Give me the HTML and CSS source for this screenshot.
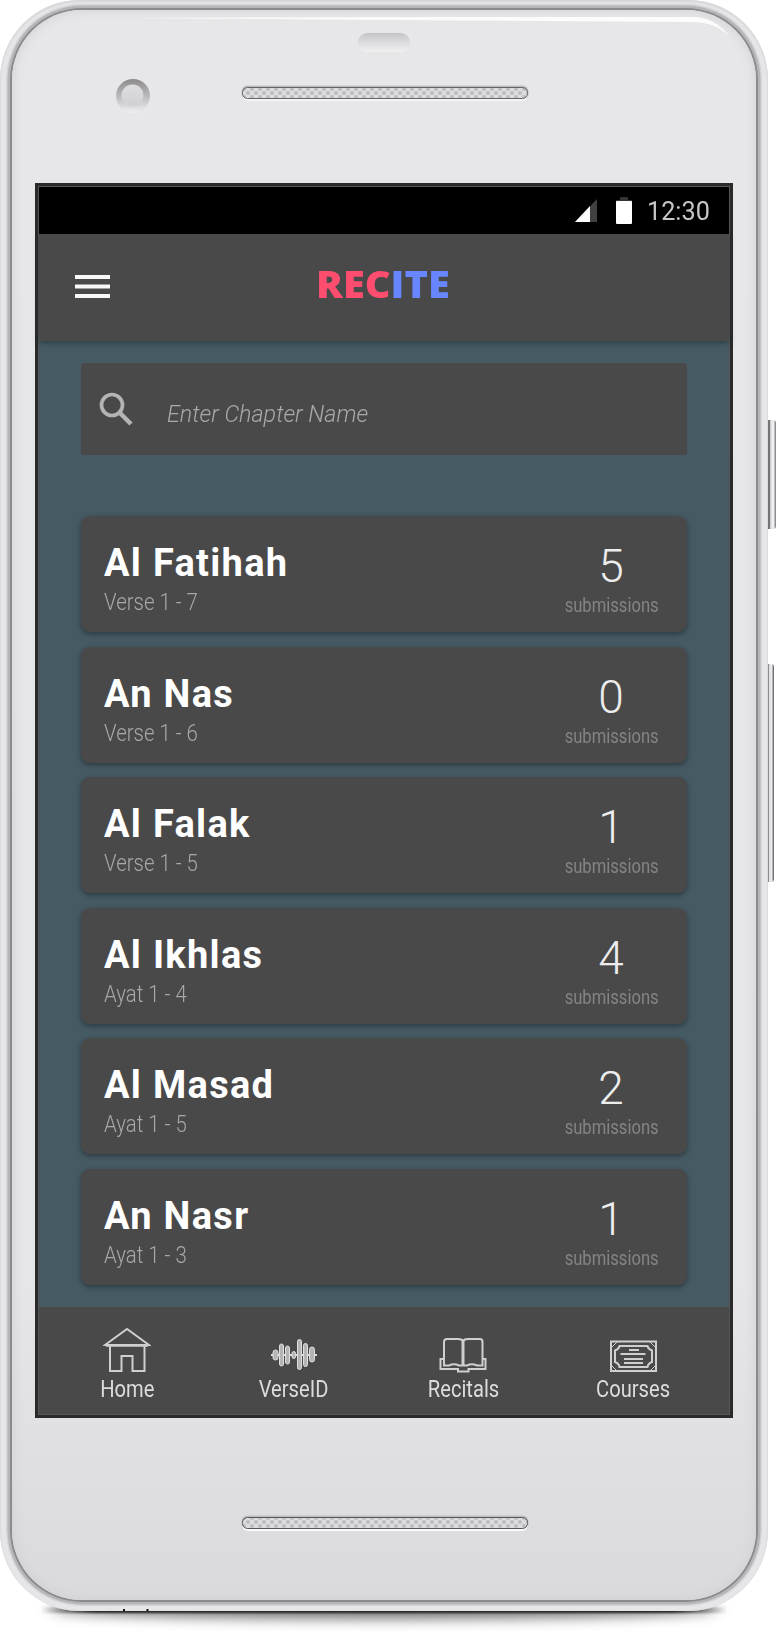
FILE: index.html
```html
<!DOCTYPE html>
<html lang="en">
<head>
<meta charset="utf-8">
<title>Recite</title>
<link rel="stylesheet" href="styles.css">
</head>
<body>
<div class="stage">
  <div class="ground"></div>
  <div class="ground contact"></div>
  <div class="side-button power"></div>
  <div class="side-button volume"></div>
  <div class="phone">
    <div class="face"></div>
    <svg class="hardware" width="768" height="183" viewBox="0 0 768 183">
      <defs>
        <linearGradient id="sensor" x1="0" y1="0" x2="0" y2="1"><stop offset="0" stop-color="#c3c2c4"/><stop offset=".5" stop-color="#dcdcde"/><stop offset="1" stop-color="#f0f0f1"/></linearGradient>
        <linearGradient id="ring" x1="0" y1="0" x2="0" y2="1"><stop offset="0" stop-color="#8d8a8b"/><stop offset=".5" stop-color="#bab9bb"/><stop offset="1" stop-color="#f0f0f2"/></linearGradient>
        <linearGradient id="lens" x1="0" y1="0" x2="0" y2="1"><stop offset="0" stop-color="#dedee0"/><stop offset="1" stop-color="#d0d0d2"/></linearGradient>
        <linearGradient id="shine"><stop offset="0" stop-color="#fff" stop-opacity="0"/><stop offset=".12" stop-color="#fff" stop-opacity=".8"/><stop offset="1" stop-color="#fff" stop-opacity=".9"/></linearGradient>
        <pattern id="mesh" x="244" y="87" width="8" height="8" patternUnits="userSpaceOnUse"><circle cx="4" cy="6" r="2" fill="#bcbcbf"/><circle cx="0" cy="2" r="2" fill="#bcbcbf"/><circle cx="8" cy="2" r="2" fill="#bcbcbf"/></pattern>
      </defs>
      <path d="M100 18 L380 17 H692 C708 17 720 24 729 36 C718 26 708 22 692 22 L380 20 Z" fill="url(#shine)"/>
      <rect x="358" y="33" width="52" height="19" rx="9.500" fill="url(#sensor)"/>
      <circle cx="133" cy="96" r="17" fill="url(#ring)"/>
      <circle cx="132.500" cy="95.500" r="11" fill="url(#lens)"/>
      <rect x="241.500" y="85.500" width="287" height="15" rx="6" fill="#bdbdc0"/>
      <rect x="242" y="89" width="286" height="12" rx="6" fill="#f5f5f7"/>
      <rect x="242.500" y="87.500" width="285" height="11" rx="5" fill="#dcdcde"/>
      <rect x="242.500" y="87.500" width="285" height="11" rx="5" fill="url(#mesh)" stroke="#626266"/>
    </svg>
    <div class="screen">
      <div class="status">
        <svg class="signal" width="24" height="24" viewBox="0 0 24 24"><path d="M1 23 23 0V23Z" fill="#414141"/><path d="M1 23 16 7V23Z" fill="#fff"/></svg>
        <svg class="battery" width="16" height="27" viewBox="0 0 16 27"><path d="M4 0H12V3H16V7H0V3H4Z" fill="#333"/><rect y="4" width="16" height="23" rx="1" fill="#fff"/></svg>
        <span class="clock">12:30</span>
      </div>
      <div class="appbar">
        <svg class="menu" width="35" height="26" viewBox="0 0 35 26" fill="#f8f8f8"><rect y="1" width="35" height="4"/><rect y="10.500" width="35" height="4"/><rect y="20" width="35" height="4"/></svg>
        <div class="logo"><span class="rec">REC</span><span class="ite">ITE</span></div>
      </div>
      <div class="content">
        <div class="search">
          <svg width="34" height="34" viewBox="0 0 34 34" fill="none" stroke="#b4b4b4"><circle cx="13" cy="13" r="10.500" stroke-width="3.700"/><path d="M20.500 20.500 32 32" stroke-width="4.500"/></svg>
          <span class="placeholder">Enter Chapter Name</span>
        </div>
        <div class="list">
          <div class="card"><div class="info"><div class="name">Al Fatihah</div><div class="range">Verse 1 - 7</div></div><div class="count"><div class="num">5</div><div class="sub">submissions</div></div></div>
          <div class="card"><div class="info"><div class="name">An Nas</div><div class="range">Verse 1 - 6</div></div><div class="count"><div class="num">0</div><div class="sub">submissions</div></div></div>
          <div class="card"><div class="info"><div class="name">Al Falak</div><div class="range">Verse 1 - 5</div></div><div class="count"><div class="num">1</div><div class="sub">submissions</div></div></div>
          <div class="card"><div class="info"><div class="name">Al Ikhlas</div><div class="range">Ayat 1 - 4</div></div><div class="count"><div class="num">4</div><div class="sub">submissions</div></div></div>
          <div class="card"><div class="info"><div class="name">Al Masad</div><div class="range">Ayat 1 - 5</div></div><div class="count"><div class="num">2</div><div class="sub">submissions</div></div></div>
          <div class="card"><div class="info"><div class="name">An Nasr</div><div class="range">Ayat 1 - 3</div></div><div class="count"><div class="num">1</div><div class="sub">submissions</div></div></div>
        </div>
      </div>
      <div class="nav">
        <div class="tab">
          <svg width="48" height="48" viewBox="0 0 48 48" fill="none" stroke="#cfcfcf" stroke-width="2"><path d="M2 19 24 3 46 19Z M7 20V45H18.500V30H29.500V45H41.500V20"/><path d="M3 19.500H45" stroke-width="2.500"/></svg>
          <span>Home</span>
        </div>
        <div class="tab verse">
          <svg width="48" height="48" viewBox="0 0 48 48" fill="#b4b4b4" stroke="#dedede" stroke-width="1"><path d="M1 29H47" stroke-width="2"/><rect x="3" y="24" width="5" height="10" rx="2.500"/><rect x="9.500" y="18" width="4" height="22" rx="2"/><rect x="15.500" y="20" width="4" height="18" rx="2"/><rect x="22" y="25.500" width="3.500" height="7" rx="1.700"/><rect x="27.500" y="13.500" width="4" height="30" rx="2"/><rect x="33.500" y="17.500" width="4" height="23" rx="2"/><rect x="39.500" y="21" width="5" height="15" rx="2.500"/></svg>
          <span>VerseID</span>
        </div>
        <div class="tab recitals">
          <svg width="48" height="48" viewBox="0 0 48 48" fill="none" stroke="#cfcfcf" stroke-width="2"><path d="M24 15C23 13.500 21 13 19 13H8Q5 13 5 16V39.500H10Q15 37 20 39.500H28Q33 37 38 39.500H43.500V16Q43.500 13 41 13H29C27 13 25 13.500 24 15Z"/><path d="M24 14V40" stroke-width="3"/><path d="M4 33H1.500V43H19V45.500H29.500V43H46.500V33H44"/></svg>
          <span>Recitals</span>
        </div>
        <div class="tab">
          <svg width="48" height="48" viewBox="0 0 48 48" fill="none" stroke="#cfcfcf" stroke-width="2"><rect x="2" y="15.500" width="45" height="29.500"/><path d="M10.500 20H38.500Q39 23 43 24.500V36Q39 37.500 38.500 41H10.500Q10 37.500 6 36V24.500Q10 23 10.500 20Z"/><path d="M20 24H30M11.500 28H36.500M15 33H34M15 37H34" stroke-width="2.200"/><path d="M3 21 8 16M41 16 46 21M3 40 8 45M41 45 46 40" stroke-width="1"/></svg>
          <span>Courses</span>
        </div>
      </div>
    </div>
    <svg class="hardware" width="768" height="193" viewBox="0 0 768 193">
      <g transform="translate(0 11)">
        <rect x="241.500" y="86.500" width="287" height="15" rx="6" fill="#bdbdc0"/>
        <rect x="242" y="90" width="286" height="12" rx="6" fill="#fafafc"/>
        <rect x="242.500" y="88.500" width="285" height="11" rx="5" fill="#dcdcde"/>
        <rect x="242.500" y="88.500" width="285" height="11" rx="5" fill="url(#mesh)" stroke="#55555a"/>
      </g>
      <path d="M123 192h2M146.500 192h2" stroke="#111" stroke-width="2"/>
    </svg>
  </div>
</div>
</body>
</html>
```
FILE: styles.css
```css
body { margin: 0; background: #fff; font-family: Roboto, "Liberation Sans", sans-serif; }
.stage { position: relative; width: 780px; height: 1632px; overflow: hidden; }
.phone {
  position: relative; box-sizing: border-box; width: 768px; height: 1611px;
  border-radius: 80px;
  background: #e6e6e9;
  box-shadow: inset 0 2px 2px #d6d6d8, inset 1px 0 1px #dfdfe1, inset -1px 0 1px #dfdfe1;
}
.face {
  position: absolute; left: 12px; top: 10px; right: 12px; bottom: 11px;
  border-radius: 70px;
  background: linear-gradient(#e7e7e9 0, #e6e6e8 80%, #dadadc 100%);
  box-shadow: 0 0 0 2px #8b8b8f, 0 0 0 4.5px #b6b6ba, 0 0 0 6px #d5d5d8, inset 0 0 12px #cfcfd2;
}
.ground {
  position: absolute; left: 50px; top: 1598px; width: 668px; height: 20px;
  border-radius: 50%/50%; background: #666; filter: blur(7px);
}
.contact { left: 40px; top: 1607px; width: 688px; height: 6px; border-radius: 3px; background: linear-gradient(90deg, transparent, #222 8%, #222 92%, transparent); filter: blur(.8px); }
.side-button { position: absolute; left: 768px; border-radius: 0 3px 3px 0; }
.power { top: 420px; width: 8px; height: 109px; background: linear-gradient(90deg, #737376 0 2px, #d0d0d2 2px 3px, #f0f0f2 4px 6px, #8d8d90 7px); }
.volume { top: 664px; width: 6px; height: 218px; background: linear-gradient(90deg, #8d8d90 0 1px, #dcdcde 1px, #f0f0f2 4px, #737376 5px); }
.hardware { position: relative; display: block; }
.screen {
  position: relative; box-sizing: border-box; display: flex; flex-direction: column;
  width: 698px; height: 1235px; margin-left: 35px;
  border: 3px solid #2a2a2b; padding: 1px; background: #555656;
}
.status { display: flex; align-items: center; height: 47px; background: #000; }
.signal { margin-left: 535px; }
.battery { margin-left: 18px; }
.clock { margin-left: 15px; font-size: 26px; line-height: 46px; color: #c6c6c6; transform: scaleX(.97); transform-origin: left; }
.appbar {
  position: relative; display: flex; align-items: flex-start; height: 107px;
  background: #494949; box-shadow: 0 2px 5px rgba(30,40,45,.55); z-index: 1;
}
.menu { margin: 40px 0 0 36px; }
.logo { margin: 28px 0 0 206px; font: 800 37px/44px "Open Sans", Lato, sans-serif; white-space: nowrap; transform: scaleX(1.075); transform-origin: left; }
.rec { color: #ff4d70; }
.ite { color: #6786ff; }
.content { flex: 1; padding: 22px 42px 0; background: #465a64; }
.search {
  display: flex; align-items: flex-start; box-sizing: border-box; height: 92px;
  padding: 29px 0 0 18px; border-radius: 3px; background: #494949;
}
.placeholder {
  margin: 8px 0 0 34px; font-size: 24px; line-height: 28px; font-style: italic; font-weight: 300;
  color: #a9a9a9; white-space: nowrap; transform: scaleX(.97); transform-origin: left;
}
.list { display: flex; flex-direction: column; gap: 14.600px; margin-top: 61px; }
.card {
  display: flex; justify-content: space-between; box-sizing: border-box; height: 116px;
  padding: 0 27px 0 23px; border-radius: 9px; background: #494949;
  box-shadow: 0 2px 5px rgba(25,35,40,.6);
}
.info { padding-top: 25px; }
.name { font-size: 38px; line-height: 44px; font-weight: 700; letter-spacing: 1.300px; color: #fff; white-space: nowrap; }
.range { margin-top: 3px; font-size: 24px; line-height: 28px; font-weight: 300; color: #a8a8a8; transform: scaleX(.85); transform-origin: left; white-space: nowrap; }
.count { display: flex; flex-direction: column; align-items: center; width: 96px; padding-top: 24px; }
.num { font-size: 46px; line-height: 52px; font-weight: 300; color: #ededed; transform: translateX(-1px); }
.sub { margin-top: 1px; font-size: 20px; line-height: 24px; color: #848484; transform: scaleX(.83); }
.nav { display: flex; height: 107px; padding-left: 4px; box-sizing: border-box; background: #494949; }
.tab { display: flex; flex-direction: column; align-items: center; width: 168.600px; flex: none; padding-top: 19px; }
.verse { transform: translateX(-2px); }
.recitals { transform: translateX(-1px); }
.tab span { margin-top: 1px; font-size: 24px; line-height: 28px; color: #dcdcdc; transform: scaleX(.84); }
```
